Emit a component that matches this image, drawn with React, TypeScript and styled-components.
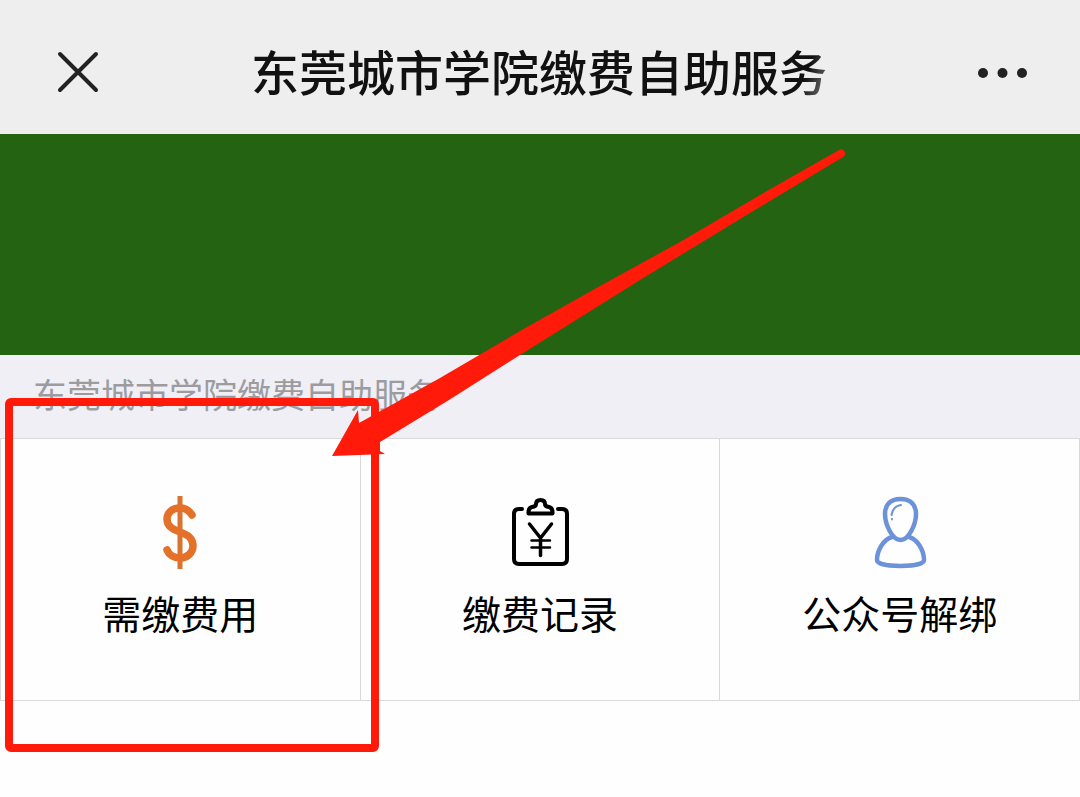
import React from "react";
import styled, { createGlobalStyle } from "styled-components";

const GlobalStyle = createGlobalStyle`
  * { box-sizing: border-box; }
  body {
    margin: 0;
    background: #fefefe;
    color: #000;
    font-family: "Noto Sans CJK SC", sans-serif;
  }
`;

const Page = styled.div`
  position: relative;
  overflow: hidden;
  padding-bottom: 96px;
`;

const NavBar = styled.header`
  display: flex;
  align-items: center;
  justify-content: space-between;
  height: 134px;
  padding: 12px 48px 0;
  background: #eee;
`;

const IconButton = styled.button`
  display: flex;
  align-items: center;
  justify-content: center;
  width: 60px;
  height: 60px;
  padding: 0;
  border: 0;
  background: none;
  color: #222;
`;

const Title = styled.h1`
  margin: 0;
  padding: 0 2px 6px 0;
  font-size: 48px;
  font-weight: 500;
  line-height: 72px;
  white-space: nowrap;
  color: transparent;
  background: linear-gradient(110deg, #111 94%, #999 100%);
  background-clip: text;
`;

const Banner = styled.div`
  height: 221px;
  background: #236311;
`;

const SectionTitle = styled.h2`
  margin: 0;
  padding: 14px 33px 20px;
  background: #efeff5;
  color: #9c9ca0;
  font-size: 34px;
  font-weight: 400;
  line-height: 49px;
`;

const Grid = styled.nav`
  display: grid;
  grid-template-columns: repeat(3, 1fr);
  border: 1px solid #d9d9d9;
  border-right: 0;
`;

const Tile = styled.a`
  display: flex;
  flex-direction: column;
  align-items: center;
  height: 261px;
  padding-top: 53px;
  border-right: 1px solid #d9d9d9;
  color: #000;
  text-decoration: none;
  font-size: 39px;
  line-height: 56px;
`;

const TileIcon = styled.svg`
  width: 80px;
  height: 80px;
  margin-bottom: 12px;
  fill: none;
  stroke-linecap: round;
  stroke-linejoin: round;
`;

const Highlight = styled.div`
  position: absolute;
  top: 398px;
  left: 5px;
  width: 374px;
  height: 354px;
  border: 8px solid #ff1a0a;
  border-radius: 6px;
  pointer-events: none;
`;

const Arrow = styled.svg`
  position: absolute;
  top: 140px;
  left: 320px;
  width: 540px;
  height: 330px;
  fill: #ff1a0a;
  pointer-events: none;
`;

export default function App() {
  return (
    <Page>
      <GlobalStyle />
      <NavBar>
        <IconButton aria-label="关闭">
          <svg width="44" height="44" viewBox="0 0 44 44" stroke="currentColor" strokeWidth="4" strokeLinecap="round">
            <path d="M4 3 40 39M40 3 4 39" />
          </svg>
        </IconButton>
        <Title>东莞城市学院缴费自助服务</Title>
        <IconButton aria-label="更多">
          <svg width="54" height="12" viewBox="0 0 54 12" fill="currentColor">
            <circle cx="8" cy="6" r="5" />
            <circle cx="27.5" cy="6" r="5" />
            <circle cx="47" cy="6" r="5" />
          </svg>
        </IconButton>
      </NavBar>
      <Banner />
      <main>
        <SectionTitle>东莞城市学院缴费自助服务</SectionTitle>
        <Grid>
          <Tile href="#fees">
            <TileIcon viewBox="0 0 80 80" aria-hidden="true">
              <path d="M40 4V77" stroke="#d9732f" strokeWidth="5" strokeLinecap="butt" />
              <path d="M52 23C49 18 45 16 40 16C32 16 27 21 27 27C27 34 32 37 40 40C48 43 53 46 53 54C53 61 47 66 40 66C34 66 29 63 27 58" stroke="#e5702a" strokeWidth="7.5" />
            </TileIcon>
            需缴费用
          </Tile>
          <Tile href="#records">
            <TileIcon viewBox="0 0 80 80" stroke="#000" strokeWidth="4" aria-hidden="true">
              <path d="M22 17H19Q14 17 14 22V67Q14 72 19 72H62Q67 72 67 67V22Q67 17 62 17H58" />
              <path d="M28.500 21.500Q28 16 32 15Q36 14.500 36 12Q36 8 40.500 8Q45 8 45 12Q45 14.500 49 15Q53 16 52.500 21.500Z" />
              <path d="M29.500 32 40.500 46 51.500 32M40.500 46V63.500" strokeWidth="3.500" />
              <path d="M31.500 48.500H50M31.500 55.500H50" strokeWidth="2.500" />
            </TileIcon>
            缴费记录
          </Tile>
          <Tile href="#unbind">
            <TileIcon viewBox="0 0 80 80" stroke="#6c92d8" strokeWidth="4.500" aria-hidden="true">
              <path d="M40.500 7C30 7 25 13 25 22C25 32 32 48 40.500 48C49 48 56 32 56 22C56 13 51 7 40.500 7Z" />
              <path d="M32 45C24 47 17 58 17 68C17 72 28 74 40.500 74C53 74 64 72 64 68C64 58 57 47 49 45" />
              <path d="M41 13Q33 14 31.500 23M32 27V27.500" strokeWidth="2" />
            </TileIcon>
            公众号解绑
          </Tile>
        </Grid>
      </main>
      <Highlight />
      <Arrow viewBox="320 140 540 330" aria-hidden="true">
        <path d="M332 456 358 410 359 423 440 378 520 331 600 286 680 242 760 195 839 150A4 4 0 0 1 843 157L740 219 640 280 520 355 449 400 380 442V451L385 454Z" />
      </Arrow>
    </Page>
  );
}
